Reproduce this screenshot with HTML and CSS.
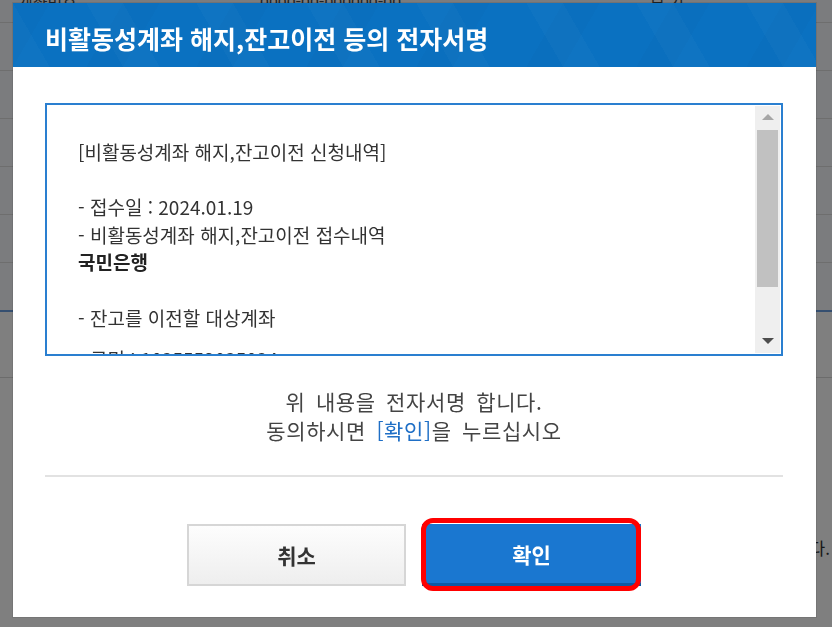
FILE: index.html
```html
<!DOCTYPE html>
<html lang="ko">
<head>
    <meta charset="UTF-8">
    <meta name="viewport" content="width=device-width, initial-scale=1.0">
    <title>비활동성계좌 해지,잔고이전 등의 전자서명</title>
    <link rel="stylesheet" href="styles.css">
</head>
<body>
    <!-- 배경 페이지 (조회 결과 목록) -->
    <div class="bg-page">
        <div class="bg-list">
            <div class="bg-row"><span class="col-a">계좌번호</span><span class="col-b">0000-00-000000-00</span><span class="col-c">보 기</span></div>
            <div class="bg-row"></div>
            <div class="bg-row"></div>
            <div class="bg-row"></div>
            <div class="bg-row"></div>
            <div class="bg-row"></div>
            <div class="bg-row last"></div>
        </div>
        <div class="bg-sum"></div>
        <p class="bg-note">※ 해지된 계좌의 잔고는 지정하신 계좌로 이전됩니다.</p>
    </div>

    <div class="dim"></div>

    <div class="modal">
        <div class="modal-header">
            <h2>비활동성계좌 해지,잔고이전 등의 전자서명</h2>
        </div>
        <div class="modal-body">
            <div class="sign-box">
                <div class="sign-text">
                    [비활동성계좌 해지,잔고이전 신청내역]<br>
                    <br>
                    - 접수일 : 2024.01.19<br>
                    - 비활동성계좌 해지,잔고이전 접수내역<br>
                    <strong>국민은행</strong><br>
                    <br>
                    - 잔고를 이전할 대상계좌
                    <div class="sign-more">
                        - 국민 : 1025553025024<br>
                        - 이전금액 : 0원
                    </div>
                </div>
                <div class="scrollbar">
                    <div class="sb-btn"><span class="arrow-up"></span></div>
                    <div class="sb-track"><div class="sb-thumb"></div></div>
                    <div class="sb-btn down"><span class="arrow-down"></span></div>
                </div>
            </div>

            <p class="sign-msg">
                위 내용을 전자서명 합니다.<br>
                동의하시면 <span class="hl">[확인]</span>을 누르십시오
            </p>

            <hr class="divider">

            <div class="btn-area">
                <button class="btn btn-cancel">취소</button>
                <button class="btn btn-ok">확인<span class="mark"></span></button>
            </div>
        </div>
    </div>
</body>
</html>
```

FILE: styles.css
```css
:root {
    --blue: #0a71c1;
    --btn-blue: #1a77d0;
    --text-color: #333;
    --line: #e2e2e2;
}

* {
    margin: 0;
    padding: 0;
    box-sizing: border-box;
    font-family: "Noto Sans CJK KR", "Noto Sans", sans-serif;
}

body {
    background-color: #fff;
    overflow: hidden;
}

/* --- 배경 페이지 --- */
.bg-page { width: 100%; }
.bg-list { margin-top: -25px; background-color: #f6f9fc; }
.bg-row { display: flex; height: 48px; border-bottom: 1px solid #dcdcdc; font-size: 16px; color: #444; padding-top: 14px; }
.bg-row.last { height: 49px; border-bottom: 2px solid #6a9ee0; }
.bg-row .col-a { width: 220px; padding-left: 18px; }
.bg-row .col-b { width: 400px; padding-left: 40px; }
.bg-row .col-c { padding-left: 30px; }
.bg-sum { height: 66px; border-bottom: 1px solid #d8d8d8; }
.bg-note { margin-top: 157px; text-align: right; font-size: 17px; color: #333; padding-right: 2px; white-space: nowrap; }

.dim {
    position: fixed;
    inset: 0;
    background-color: rgba(0, 0, 0, 0.5);
}

/* --- 팝업 --- */
.modal {
    position: fixed;
    top: 3px;
    left: 13px;
    width: 803px;
    background-color: #fff;
    box-shadow: 0 0 0 1px rgba(0, 0, 0, 0.08);
}

.modal-header {
    height: 64px;
    padding: 6px 32px 0 32px;
    background-color: var(--blue);
    background-image:
        linear-gradient(60deg, rgba(255, 255, 255, 0.018) 25%, transparent 25%, transparent 75%, rgba(255, 255, 255, 0.018) 75%),
        linear-gradient(-60deg, rgba(0, 0, 0, 0.015) 25%, transparent 25%, transparent 75%, rgba(0, 0, 0, 0.015) 75%);
    background-size: 110px 64px;
}
.modal-header h2 {
    color: #fff;
    font-size: 25px;
    font-weight: 700;
    line-height: 58px;
    white-space: nowrap;
}

.modal-body {
    padding: 36px 33px 31px 32px;
}

.sign-box {
    display: flex;
    height: 253px;
    border: 2px solid #2a7fd0;
    background-color: #fff;
}

.sign-text {
    flex: 1;
    min-width: 0;
    overflow: hidden;
    padding: 33px 20px 0 31px;
    font-size: 19px;
    line-height: 27.6px;
    color: var(--text-color);
    white-space: nowrap;
}
.sign-text strong { font-weight: 700; color: #222; }
.sign-more { margin-top: 14px; }

/* 스크롤바 모양 */
.scrollbar {
    width: 25px;
    margin: 1px 1px 1px 0;
    display: flex;
    flex-direction: column;
    background-color: #efefef;
}
.sb-btn { height: 22px; display: flex; justify-content: center; align-items: center; }
.sb-btn.down { height: 24px; }
.arrow-up { width: 0; height: 0; border-left: 6px solid transparent; border-right: 6px solid transparent; border-bottom: 6px solid #a6a6a6; }
.arrow-down { width: 0; height: 0; border-left: 6px solid transparent; border-right: 6px solid transparent; border-top: 6px solid #4d4d4d; }
.sb-track { flex: 1; padding: 2px 2px 0 2px; }
.sb-thumb { height: 157px; background-color: #c1c1c1; }

.sign-msg {
    margin-top: 31px;
    text-align: center;
    font-size: 21px;
    line-height: 29px;
    color: #444;
    letter-spacing: 0.6px;
    word-spacing: 4px;
}
.sign-msg .hl { color: #1f6fc6; }

.divider {
    margin-top: 30px;
    border: none;
    height: 2px;
    background-color: var(--line);
}

.btn-area {
    margin-top: 47px;
    display: flex;
    justify-content: center;
    gap: 16px;
}

.btn {
    width: 219px;
    height: 62px;
    font-size: 21px;
    font-weight: 700;
    cursor: pointer;
}
.btn-cancel {
    color: #333;
    border: 2px solid #d6d6d6;
    background: linear-gradient(#fdfdfd, #eeeeee);
}
.btn-ok {
    position: relative;
    color: #fff;
    border: none;
    border-bottom: 3px solid #0d5aa5;
    background-color: var(--btn-blue);
}
/* 빨간 강조 테두리 */
.btn-ok .mark {
    position: absolute;
    top: -6px;
    bottom: -8px;
    left: -1px;
    right: 0;
    border: 5px solid #ff0000;
    border-radius: 12px;
}
```
